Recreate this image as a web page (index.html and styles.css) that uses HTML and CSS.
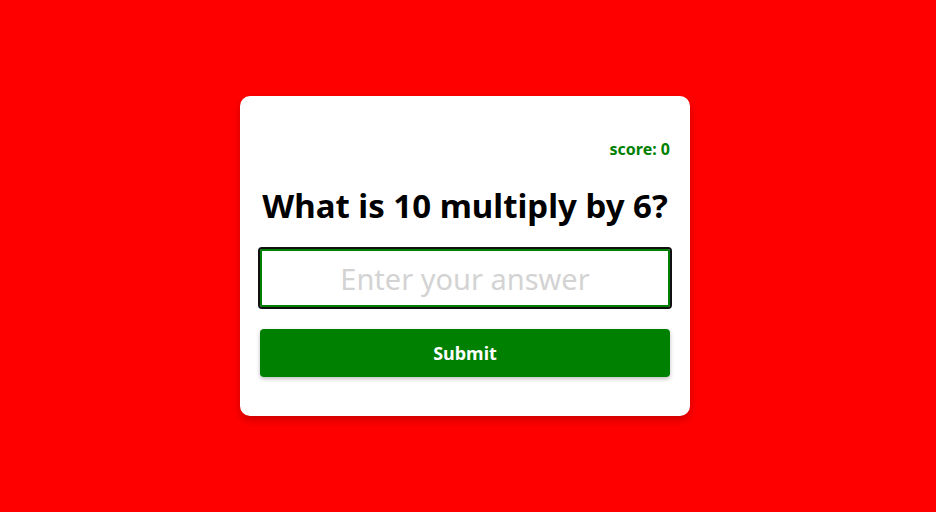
FILE: index.html
```html
<!DOCTYPE html>
<html lang="en">
<head>
<meta charset="utf-8">
<title>Quiz</title>
<link rel="stylesheet" href="styles.css">
</head>
<body>
<main class="page">
  <section class="card">
    <p class="score">score: 0</p>
    <h1 class="question">What is 10 multiply by 6?</h1>
    <form class="form">
      <input class="answer" type="text" placeholder="Enter your answer">
      <button class="submit" type="button">Submit</button>
    </form>
  </section>
</main>
</body>
</html>
```
FILE: styles.css
```css
* { box-sizing: border-box; }
html, body { margin: 0; padding: 0; }
body {
  background: #ff0000;
  font-family: "Comic Sans MS", "Noto Sans", sans-serif;
}
.page {
  height: 512px;
  display: flex;
  align-items: center;
  justify-content: center;
  padding-right: 6px;
}
.card {
  width: 450px;
  height: 320px;
  background: #fff;
  border-radius: 10px;
  box-shadow: 0 4px 8px rgba(0, 0, 0, 0.2);
  padding: 42px 20px 20px;
  display: flex;
  flex-direction: column;
}
.score {
  margin: 0;
  text-align: right;
  color: #008000;
  font-weight: bold;
  font-size: 16px;
  line-height: 22px;
}
.question {
  margin: 26px 0 0;
  font-size: 33px;
  line-height: 40px;
  font-weight: bold;
  color: #000;
  text-align: center;
  white-space: nowrap;
}
.form {
  margin-top: 23px;
  display: flex;
  flex-direction: column;
  gap: 22px;
}
.answer {
  width: 100%;
  height: 58px;
  margin: 0;
  border: 2px solid #008000;
  border-radius: 2px;
  outline: 2px solid #101010;
  font-family: inherit;
  font-size: 29px;
  text-align: center;
  padding: 0 10px;
}
.answer::placeholder { color: #d3d3d3; }
.submit {
  height: 48px;
  border: none;
  border-radius: 4px;
  background: #008000;
  color: #fff;
  font-family: inherit;
  font-size: 18px;
  font-weight: bold;
  box-shadow: 0 2px 4px rgba(0, 0, 0, 0.25);
}
```
